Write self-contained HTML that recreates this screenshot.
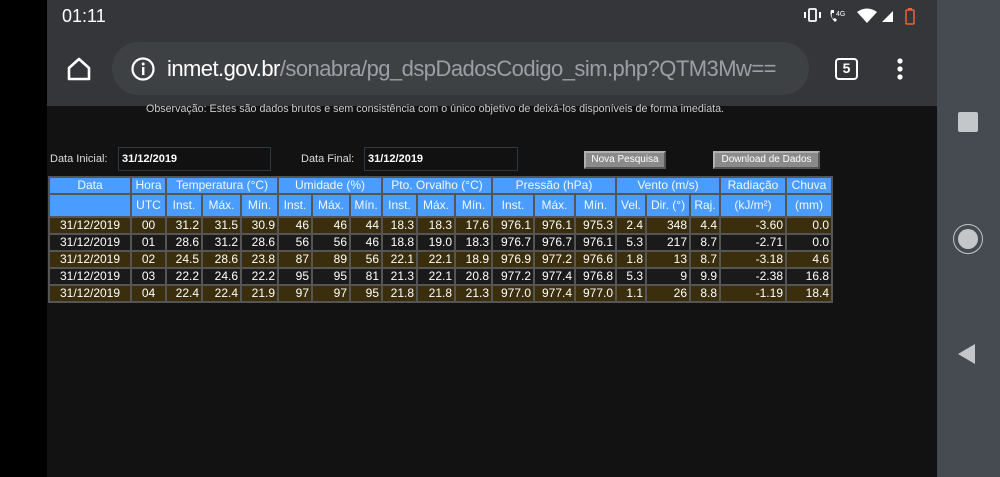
<!DOCTYPE html>
<html><head><meta charset="utf-8"><style>
*{margin:0;padding:0;box-sizing:border-box}
body{width:1000px;height:477px;overflow:hidden;background:#000;font-family:"Liberation Sans",sans-serif;position:relative}
.chrome{position:absolute;left:47px;top:0;width:890px;height:106px;background:#35363a}
.nav{position:absolute;left:937px;top:0;width:63px;height:477px;background:#454b50}
.page{position:absolute;left:47px;top:106px;width:890px;height:371px;background:#121212}
.pill{position:absolute;left:112px;top:42px;width:697px;height:53px;border-radius:27px;background:#3e4144}
.abs{position:absolute}
table{position:absolute;left:48px;top:176px;border-collapse:collapse;table-layout:fixed;font-size:12px;color:#fff}
td{border:2px solid #555;padding:0 2px;white-space:nowrap;overflow:hidden;line-height:13px}
tr.h td{background:#4a9cff;text-align:center;color:#f4f8ff}
tr.h1 td{height:17px}
tr.h2 td{height:23px}
tr.d td{height:17px;text-align:right}
tr.d td.c{text-align:center}
tr.b td{background:#3a2e0c}
tr.k td{background:#1a1a1a}
.inp{position:absolute;height:24px;border:1px solid #2a3a44;background:#111;color:#fff;font-weight:bold;font-size:11px;line-height:22px;padding-left:3px}
.btn{position:absolute;height:18px;background:#8a8a8a;border:2px solid #b0b0b0;border-right-color:#555;border-bottom-color:#555;color:#fff;font-size:10px;text-align:center;line-height:14px}
.lbl{position:absolute;color:#ddd;font-size:11px}
</style></head><body>
<div class="chrome"></div>
<div class="nav"></div>
<div class="page"></div>
<div class="abs" style="left:62px;top:6px;color:#fff;font-size:18px">01:11</div>
<svg class="abs" style="left:800px;top:6px" width="125" height="22" viewBox="0 0 125 22">
<rect x="9" y="3" width="7" height="12" rx="1" fill="none" stroke="#fff" stroke-width="1.8"/>
<rect x="4" y="6" width="2" height="6" fill="#fff"/><rect x="19" y="6" width="2" height="6" fill="#fff"/>
<path d="M31 4 q-2 6 4 12 l2-2 -2-2 -2 1 q-2-3-1-6 l2 0 0-3z" fill="#fff"/>
<text x="36" y="10" fill="#fff" font-size="7" font-family="Liberation Sans">4G</text>
<path d="M57 6 q10-7 20 0 l-10 11z" fill="#fff"/>
<path d="M82 16 l11-11 v11z" fill="#fff"/>
<rect x="106" y="4" width="8" height="14" rx="1" fill="none" stroke="#f06030" stroke-width="1.5"/>
<rect x="108" y="2" width="4" height="2" fill="#f06030"/>
</svg>
<div class="pill"></div>
<svg class="abs" style="left:66px;top:56px" width="26" height="26" viewBox="0 0 26 26"><path d="M13 3 L3 12 V23 H23 V12 Z" fill="none" stroke="#fff" stroke-width="2.6" stroke-linejoin="round"/></svg>
<svg class="abs" style="left:130px;top:56px" width="26" height="26" viewBox="0 0 26 26"><circle cx="13" cy="13" r="10.5" fill="none" stroke="#fff" stroke-width="2.2"/><rect x="12" y="11" width="2.4" height="8" fill="#fff"/><circle cx="13.2" cy="8" r="1.5" fill="#fff"/></svg>
<div class="abs" style="left:167px;top:56px;font-size:22px;color:#fff;letter-spacing:-0.55px">inmet.gov.br<span style="color:#9aa0a6">/sonabra/pg_dspDadosCodigo_sim.php?QTM3Mw==</span></div>
<div class="abs" style="left:835px;top:58px;width:23px;height:22px;border:2.4px solid #fff;border-radius:4px;color:#fff;font-size:14px;font-weight:bold;text-align:center;line-height:17px">5</div>
<svg class="abs" style="left:893px;top:56px" width="14" height="26"><circle cx="7" cy="5" r="2.6" fill="#fff"/><circle cx="7" cy="13" r="2.6" fill="#fff"/><circle cx="7" cy="21" r="2.6" fill="#fff"/></svg>
<div class="abs" style="left:146px;top:103px;font-size:10.7px;color:#ccc">Observação: Estes são dados brutos e sem consistência com o único objetivo de deixá-los disponíveis de forma imediata.</div>
<div class="abs" style="left:958px;top:112px;width:20px;height:20px;border-radius:2px;background:#c4c7c9"></div>
<div class="abs" style="left:953px;top:224px;width:30px;height:30px;border-radius:50%;border:1.5px solid #c4c7c9"></div>
<div class="abs" style="left:958px;top:229px;width:20px;height:20px;border-radius:50%;background:#c4c7c9"></div>
<svg class="abs" style="left:956px;top:343px" width="22" height="22"><path d="M2 11 L19 1 V21 Z" fill="#c4c7c9"/></svg>
<div class="lbl" style="left:50px;top:153px">Data Inicial:</div>
<div class="inp" style="left:118px;top:147px;width:153px">31/12/2019</div>
<div class="lbl" style="left:301px;top:153px">Data Final:</div>
<div class="inp" style="left:364px;top:147px;width:154px">31/12/2019</div>
<div class="btn" style="left:584px;top:151px;width:82px">Nova Pesquisa</div>
<div class="btn" style="left:713px;top:151px;width:107px">Download de Dados</div>
<table>
<colgroup><col style="width:82px"><col style="width:35px"><col style="width:36px"><col style="width:39px"><col style="width:37px"><col style="width:34px"><col style="width:38px"><col style="width:32px"><col style="width:35px"><col style="width:38px"><col style="width:37px"><col style="width:42px"><col style="width:41px"><col style="width:41px"><col style="width:30px"><col style="width:44px"><col style="width:30px"><col style="width:66px"><col style="width:46px"></colgroup>
<tr class="h h1"><td>Data</td><td>Hora</td><td colspan="3">Temperatura (°C)</td><td colspan="3">Umidade (%)</td><td colspan="3">Pto. Orvalho (°C)</td><td colspan="3">Pressão (hPa)</td><td colspan="3">Vento (m/s)</td><td>Radiação</td><td>Chuva</td></tr>
<tr class="h h2"><td></td><td>UTC</td><td>Inst.</td><td>Máx.</td><td>Mín.</td><td>Inst.</td><td>Máx.</td><td>Mín.</td><td>Inst.</td><td>Máx.</td><td>Mín.</td><td>Inst.</td><td>Máx.</td><td>Mín.</td><td>Vel.</td><td>Dir. (°)</td><td>Raj.</td><td>(kJ/m²)</td><td>(mm)</td></tr>
<tr class="d b"><td class="c">31/12/2019</td><td class="c">00</td><td>31.2</td><td>31.5</td><td>30.9</td><td>46</td><td>46</td><td>44</td><td>18.3</td><td>18.3</td><td>17.6</td><td>976.1</td><td>976.1</td><td>975.3</td><td>2.4</td><td>348</td><td>4.4</td><td>-3.60</td><td>0.0</td></tr>
<tr class="d k"><td class="c">31/12/2019</td><td class="c">01</td><td>28.6</td><td>31.2</td><td>28.6</td><td>56</td><td>56</td><td>46</td><td>18.8</td><td>19.0</td><td>18.3</td><td>976.7</td><td>976.7</td><td>976.1</td><td>5.3</td><td>217</td><td>8.7</td><td>-2.71</td><td>0.0</td></tr>
<tr class="d b"><td class="c">31/12/2019</td><td class="c">02</td><td>24.5</td><td>28.6</td><td>23.8</td><td>87</td><td>89</td><td>56</td><td>22.1</td><td>22.1</td><td>18.9</td><td>976.9</td><td>977.2</td><td>976.6</td><td>1.8</td><td>13</td><td>8.7</td><td>-3.18</td><td>4.6</td></tr>
<tr class="d k"><td class="c">31/12/2019</td><td class="c">03</td><td>22.2</td><td>24.6</td><td>22.2</td><td>95</td><td>95</td><td>81</td><td>21.3</td><td>22.1</td><td>20.8</td><td>977.2</td><td>977.4</td><td>976.8</td><td>5.3</td><td>9</td><td>9.9</td><td>-2.38</td><td>16.8</td></tr>
<tr class="d b"><td class="c">31/12/2019</td><td class="c">04</td><td>22.4</td><td>22.4</td><td>21.9</td><td>97</td><td>97</td><td>95</td><td>21.8</td><td>21.8</td><td>21.3</td><td>977.0</td><td>977.4</td><td>977.0</td><td>1.1</td><td>26</td><td>8.8</td><td>-1.19</td><td>18.4</td></tr>
</table>
</body></html>
